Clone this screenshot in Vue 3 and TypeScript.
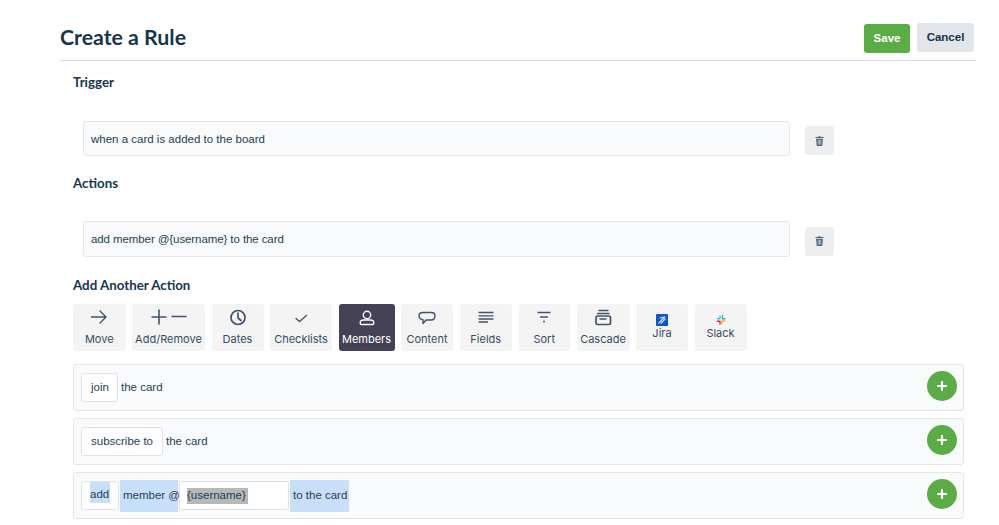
<script setup lang="ts">
interface Tab { label: string; icon: string; active?: boolean; brand?: boolean; w: number }
const tabs: Tab[] = [
  { label: 'Move', icon: 'move', w: 52.5 },
  { label: 'Add/Remove', icon: 'addremove', w: 73 },
  { label: 'Dates', icon: 'dates', w: 52 },
  { label: 'Checklists', icon: 'check', w: 62 },
  { label: 'Members', icon: 'member', active: true, w: 56 },
  { label: 'Content', icon: 'content', w: 52 },
  { label: 'Fields', icon: 'fields', w: 52.5 },
  { label: 'Sort', icon: 'sort', w: 51.5 },
  { label: 'Cascade', icon: 'cascade', w: 53 },
  { label: 'Jira', icon: 'jira', brand: true, w: 52 },
  { label: 'Slack', icon: 'slack', brand: true, w: 52 },
]
</script>

<template>
  <div class="page">
    <header class="head">
      <h1>Create a Rule</h1>
      <div class="head-actions">
        <button class="btn save">Save</button>
        <button class="btn cancel">Cancel</button>
      </div>
    </header>

    <section class="body">
      <h2 class="h-trigger">Trigger</h2>
      <div class="rule-line l1">
        <div class="rule">when a card is added to the board</div>
        <button class="trash" aria-label="Delete">
          <svg width="9" height="10" viewBox="0 0 10 11"><path d="M3.5 1 L3.9 .2 H6.1 L6.5 1 H9.5 V2.2 H.5 V1 Z M1.2 3 H8.8 L8.2 10.2 Q8.1 11 7.3 11 H2.7 Q1.9 11 1.8 10.2 Z" fill="#4f6475"/><path d="M3.5 4.2 V9.6 M5 4.2 V9.6 M6.5 4.2 V9.6" stroke="#eceef0" stroke-width=".7"/></svg>
        </button>
      </div>

      <h2 class="h-actions">Actions</h2>
      <div class="rule-line l2">
        <div class="rule">add member @{username} to the card</div>
        <button class="trash" aria-label="Delete">
          <svg width="9" height="10" viewBox="0 0 10 11"><path d="M3.5 1 L3.9 .2 H6.1 L6.5 1 H9.5 V2.2 H.5 V1 Z M1.2 3 H8.8 L8.2 10.2 Q8.1 11 7.3 11 H2.7 Q1.9 11 1.8 10.2 Z" fill="#4f6475"/><path d="M3.5 4.2 V9.6 M5 4.2 V9.6 M6.5 4.2 V9.6" stroke="#eceef0" stroke-width=".7"/></svg>
        </button>
      </div>

      <h2 class="h-another">Add Another Action</h2>
      <nav class="tabs">
        <div v-for="t in tabs" :key="t.label" class="tab" :class="{ active: t.active, brand: t.brand }" :style="{ width: t.w + 'px' }">
          <svg class="ic" width="30" height="20" viewBox="0 0 30 20" fill="none" :stroke="t.active ? '#fff' : '#42526e'" stroke-width="1.4" stroke-linecap="round" stroke-linejoin="round">
            <template v-if="t.icon === 'move'"><path d="M7.5 10 H22 M16 4 L22 10 L16 16"/></template>
            <template v-else-if="t.icon === 'addremove'"><path d="M-2.5 10 H12.5 M5 2.5 V17.5 M17.5 9.5 H32.5" stroke-width="1.6" stroke-linecap="butt"/></template>
            <template v-else-if="t.icon === 'dates'"><circle cx="15" cy="10.5" r="7" stroke-width="1.7"/><path d="M15 6 V11 L18 13.5" stroke-width="1.7"/></template>
            <template v-else-if="t.icon === 'check'"><path d="M10 11.5 L13.5 14.5 L20.5 8.5"/></template>
            <template v-else-if="t.icon === 'member'"><circle cx="15" cy="8" r="3.7"/><path d="M8.2 16 Q8.2 13 11.5 13 H18.5 Q21.8 13 21.8 16 Q21.8 17.5 20.5 17.5 H9.5 Q8.2 17.5 8.2 16 Z"/></template>
            <template v-else-if="t.icon === 'content'"><path d="M11 5.5 H19 Q23 5.5 23 9 Q23 13 19 13 H14 L11 16.5 V12.8 Q7 12 7 9 Q7 5.5 11 5.5 Z"/></template>
            <template v-else-if="t.icon === 'fields'"><path d="M7.5 5.5 H22.5 M7.5 8.8 H22.5 M7.5 12 H22.5 M7.5 15 H17" stroke-width="1.3" stroke-linecap="butt"/></template>
            <template v-else-if="t.icon === 'sort'"><path d="M8.5 5.5 H21.5 M11 10 H19 M14 14.5 H16" stroke-width="1.4" stroke-linecap="butt"/></template>
            <template v-else-if="t.icon === 'cascade'"><path d="M11 3.5 H20 M9.5 6.5 H21" stroke-width="1.5"/><rect x="8" y="9" width="14.5" height="8.5" rx="1.5" stroke-width="1.7"/><path d="M12 12 H18" stroke-width="1.5"/></template>
            <template v-else-if="t.icon === 'jira'">
              <rect x="9" y="7" width="12" height="12" rx="1" fill="#0b56c8" stroke="none"/>
              <path d="M11.8 16.2 L17.6 10 M14.2 16 L18.2 11.8 M13 11 L17 10" stroke="#dbe7fb" stroke-width="1.2"/>
            </template>
            <template v-else-if="t.icon === 'slack'">
              <rect x="9.5" y="7" width="11" height="11" rx="2" fill="#fff" stroke="none"/>
              <path d="M14 8.7 V11.5 M11.3 11.7 H14" stroke="#36c5f0"/>
              <path d="M16.5 8.5 V12 M16.5 11.7 H19" stroke="#2eb67d"/>
              <path d="M16 14 H19 M16 14 V17" stroke="#ecb22e"/>
              <path d="M11.3 14.2 H14 M14 14.2 V17" stroke="#e01e5a"/>
            </template>
          </svg>
          <span class="tab-label">{{ t.label }}</span>
        </div>
      </nav>

      <div class="option o1">
        <span class="chip c-join">join</span>
        <span class="txt">the card</span>
        <button class="plus" aria-label="Add"><svg width="10" height="10" viewBox="0 0 10 10"><path d="M5 1 V9 M1 5 H9" stroke="#fff" stroke-width="2.2" stroke-linecap="round"/></svg></button>
      </div>
      <div class="option o2">
        <span class="chip c-sub">subscribe to</span>
        <span class="txt">the card</span>
        <button class="plus" aria-label="Add"><svg width="10" height="10" viewBox="0 0 10 10"><path d="M5 1 V9 M1 5 H9" stroke="#fff" stroke-width="2.2" stroke-linecap="round"/></svg></button>
      </div>
      <div class="option o3">
        <span class="chip c-add"><span class="sel-inline">add</span></span>
        <span class="sel sel-member">member @</span>
        <span class="chip c-user"><span class="sel-gray">{username}</span></span>
        <span class="sel sel-to">to the card</span>
        <button class="plus" aria-label="Add"><svg width="10" height="10" viewBox="0 0 10 10"><path d="M5 1 V9 M1 5 H9" stroke="#fff" stroke-width="2.2" stroke-linecap="round"/></svg></button>
      </div>
    </section>
  </div>
</template>

<style>
html, body { margin: 0; background: #fff; }
</style>

<style scoped>
.page {
  width: 916px;
  margin-left: 60px;
  height: 525px;
  overflow: hidden;
  font-family: "Liberation Sans", Arial, sans-serif;
  color: #253f52;
}
.head {
  height: 60px;
  border-bottom: 1px solid #dcdfe2;
  display: flex;
  justify-content: space-between;
  position: relative;
}
h1 {
  margin: 22px 0 0;
  font: 700 21.3px/30px Lato, sans-serif;
  color: #16364d;
}
.head-actions { display: flex; gap: 7px; padding: 23px 2px 0 0; align-items: flex-start; }
.btn {
  border: 0;
  border-radius: 3px;
  font: 700 11.5px/1 "Liberation Sans", Arial, sans-serif;
  padding: 0;
}
.save { width: 46px; height: 29px; margin-top: 1px; background: #5aac44; color: #fff; }
.cancel { width: 57px; height: 29px; background: #e2e5e9; color: #15334a; }
.body { padding-left: 13px; }
h2 {
  margin: 0;
  font: 700 13.3px/18px Lato, sans-serif;
  color: #16364d;
}
.h-trigger { padding-top: 12px; }
.h-actions { padding-top: 18px; }
.h-another { padding-top: 19px; }
.rule-line { display: flex; align-items: center; padding-left: 10px; gap: 15px; }
.l1 { margin-top: 30px; }
.l2 { margin-top: 29px; }
.rule {
  box-sizing: border-box;
  width: 707px;
  height: 35px;
  border: 1px solid #e3e6ea;
  border-radius: 3px;
  background: #f9fafc;
  padding: 0 7px;
  font-size: 11.5px;
  line-height: 34px;
  color: #253f52;
}
.l2 .rule { height: 36px; letter-spacing: -0.09px; }
.trash {
  width: 29px;
  height: 29px;
  border: 0;
  padding: 0;
  border-radius: 3px;
  background: #eceef0;
  display: flex;
  align-items: center;
  justify-content: center;
  margin-top: 4px;
}
.tabs { display: flex; gap: 6.5px; margin-top: 10px; }
.tab {
  box-sizing: border-box;
  height: 47px;
  background: #f4f4f4;
  border-radius: 3px;
  display: flex;
  flex-direction: column;
  align-items: center;
  padding-top: 3px;
  flex: none;
}
.tab .ic { display: block; flex: none; overflow: visible; }
.tab-label {
  font: 400 11px/14px Inter, sans-serif;
  color: #344e63;
  margin-top: 5px;
  white-space: nowrap;
}
.tab.brand .tab-label { margin-top: -1px; }
.tab.active { background: #434156; }
.tab.active .tab-label { color: #fff; }
.option {
  box-sizing: border-box;
  width: 891px;
  height: 47px;
  border: 1px solid #e3e6ea;
  border-radius: 3px;
  background: #f9fafc;
  display: flex;
  align-items: center;
  padding-left: 7px;
  font-size: 11.5px;
  color: #253f52;
  position: relative;
}
.o1 { margin-top: 13px; }
.o2 { margin-top: 7px; }
.o3 { margin-top: 7px; }
.chip {
  box-sizing: border-box;
  height: 29px;
  background: #fff;
  border: 1px solid #dfe2e6;
  border-radius: 3px;
  display: inline-flex;
  align-items: center;
  padding: 0 0 2px 9px;
  white-space: nowrap;
}
.c-join { width: 37px; }
.c-sub { width: 82px; }
.c-add { width: 38px; padding: 0 0 0 8px; }
.c-user { width: 110px; margin-left: 1px; padding: 0 0 0 7px; }
.txt { margin-left: 3px; padding-bottom: 2px; }
.sel {
  background: #c8dffc;
  height: 32px;
  display: inline-flex;
  align-items: center;
  white-space: nowrap;
}
.sel-member { width: 58px; margin-left: 1px; padding: 0 0 2px 3px; box-sizing: border-box; }
.sel-to { width: 59px; margin-left: 1px; padding: 0 0 2px 3px; box-sizing: border-box; }
.sel-inline { background: #c8dffc; padding: 4px 1px 1px 0; line-height: 16px; display: block; align-self: flex-start; }
.sel-gray { background: #b7b9b9; line-height: 14px; padding-bottom: 2px; display: block; width: 61px; white-space: nowrap; }
.plus {
  position: absolute;
  right: 6px;
  top: 6px;
  width: 30px;
  height: 30px;
  border: 0;
  padding: 0;
  border-radius: 50%;
  background: #5aac44;
  display: flex;
  align-items: center;
  justify-content: center;
}
</style>
